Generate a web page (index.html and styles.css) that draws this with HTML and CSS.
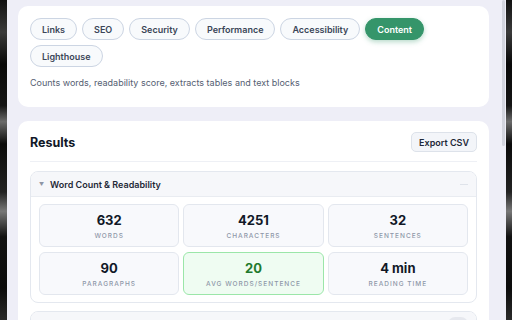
FILE: index.html
```html
<!DOCTYPE html>
<html>
	<head>
		<meta charset="UTF-8">
		<title>Content analyzer</title>
		<link rel="stylesheet" href="styles.css">
	</head>
	<body>
		<div class="screen">
			<div class="frame frame-left"></div>
			<div class="viewport">
				<div class="card tools">
					<div class="pills">
						<span class="pill">Links</span>
						<span class="pill">SEO</span>
						<span class="pill">Security</span>
						<span class="pill">Performance</span>
						<span class="pill">Accessibility</span>
						<span class="pill active">Content</span>
						<span class="pill">Lighthouse</span>
					</div>
					<p class="desc">Counts words, readability score, extracts tables and text blocks</p>
				</div>
				<div class="card results">
					<div class="results-head">
						<h2>Results</h2>
						<button class="btn">Export CSV</button>
					</div>
					<div class="section">
						<div class="section-head">
							<span class="caret">&#9660;</span>
							<span class="section-title">Word Count &amp; Readability</span>
							<span class="dash"></span>
						</div>
						<div class="stats">
							<div class="stat"><b>632</b><span>Words</span></div>
							<div class="stat"><b>4251</b><span>Characters</span></div>
							<div class="stat"><b>32</b><span>Sentences</span></div>
							<div class="stat"><b>90</b><span>Paragraphs</span></div>
							<div class="stat good"><b>20</b><span>Avg Words/Sentence</span></div>
							<div class="stat"><b>4 min</b><span>Reading Time</span></div>
						</div>
					</div>
					<div class="section">
						<div class="section-head">
							<span class="caret">&#9660;</span>
							<span class="section-title">Text Blocks</span>
							<span class="badge">23</span>
						</div>
					</div>
				</div>
			</div>
			<div class="scrollbar"><div class="thumb"></div></div>
			<div class="frame frame-right"></div>
		</div>
	</body>
</html>
```

FILE: styles.css
```css
*{
	margin: 0;
	padding: 0;
	box-sizing: border-box;
}
body{
	font-family: Inter, "Liberation Sans", sans-serif;
	color: #111827;
	background: #000;
}
.screen{
	display: flex;
	width: 512px;
	height: 320px;
	overflow: hidden;
}
.frame{
	background: linear-gradient(180deg, #111 0%, #3a3a3a 10%, #080808 20%, #151515 33%, #6a6a6a 38%, #0a0a0a 45%, #222 60%, #777 66%, #111 74%, #0c0c0c 90%, #2a2a2a 100%);
}
.frame-left{
	width: 7px;
}
.frame-right{
	width: 6px;
}
.viewport{
	flex: 1;
	background: #eeeef7;
	padding: 6px 11px 0 11px;
	display: flex;
	flex-direction: column;
	gap: 14px;
	overflow: hidden;
}
.scrollbar{
	width: 6px;
	background: #eeeef7;
	padding: 0 1px 0 2px;
}
.thumb{
	height: 146px;
	background: #d3d5df;
	border-radius: 2px;
}
.card{
	background: #fff;
	border-radius: 10px;
	padding: 12px;
	flex-shrink: 0;
}
.tools{
	height: 101px;
}
.pills{
	display: flex;
	flex-wrap: wrap;
	gap: 5px;
}
.pill{
	display: inline-flex;
	align-items: center;
	height: 22px;
	padding: 0 11px;
	border: 1px solid #ccd5e3;
	border-radius: 11px;
	background: #f8fafc;
	color: #3b4658;
	font-size: 9px;
	font-weight: 600;
}
.pill.active{
	background: #35956a;
	border-color: #35956a;
	color: #fff;
	box-shadow: 0 2px 5px rgba(53,149,106,0.35);
}
.desc{
	margin-top: 10px;
	font-size: 9px;
	color: #556072;
}
.results{
	padding-top: 11px;
	flex: 1;
}
.results-head{
	display: flex;
	align-items: center;
	justify-content: space-between;
	padding-bottom: 9px;
	border-bottom: 1px solid #eef0f5;
	margin-bottom: 9px;
}
.results-head h2{
	font-size: 12.5px;
	font-weight: 700;
	color: #111827;
}
.btn{
	font-family: inherit;
	height: 20px;
	padding: 0 7px;
	border: 1px solid #dde2ea;
	border-radius: 5px;
	background: #f3f5f9;
	color: #1e2838;
	font-size: 9px;
	font-weight: 600;
}
.section{
	border: 1px solid #e4e8ef;
	border-radius: 8px;
	overflow: hidden;
	margin-bottom: 8px;
}
.section-head{
	display: flex;
	align-items: center;
	height: 25px;
	padding: 0 8px;
	background: #f6f7fa;
	border-bottom: 1px solid #e9ecf1;
}
.caret{
	font-size: 5px;
	color: #8d95a5;
	margin-right: 6px;
}
.section-title{
	flex: 1;
	font-size: 9px;
	font-weight: 600;
	color: #1f2937;
}
.dash{
	width: 8px;
	height: 1px;
	background: #dfe3ea;
}
.badge{
	font-size: 8px;
	font-weight: 600;
	color: #555f70;
	background: #e6e8ee;
	border-radius: 8px;
	padding: 2px 5px;
}
.stats{
	display: grid;
	grid-template-columns: repeat(3, 1fr);
	gap: 5px 4px;
	padding: 7px 8px 7px 8px;
}
.stat{
	height: 43px;
	border: 1px solid #e3e7ee;
	border-radius: 6px;
	background: #f8f9fc;
	display: flex;
	flex-direction: column;
	align-items: center;
	justify-content: center;
	gap: 4px;
	padding-top: 2px;
}
.stat b{
	font-size: 13px;
	font-weight: 700;
	color: #111827;
	line-height: 15px;
}
.stat span{
	font-size: 6.5px;
	letter-spacing: 1px;
	text-transform: uppercase;
	color: #8e97a8;
	font-weight: 500;
}
.stat.good{
	background: #effcf2;
	border-color: #9be6a9;
}
.stat.good b{
	color: #1f7a2e;
}
```
